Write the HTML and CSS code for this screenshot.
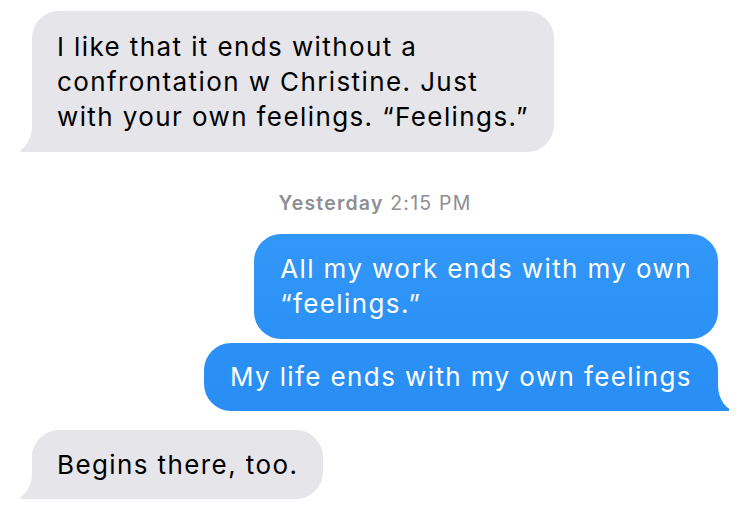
FILE: index.html
```html
<!DOCTYPE html>
<html lang="en">
<head>
    <meta charset="UTF-8">
    <meta name="viewport" content="width=device-width, initial-scale=1.0">
    <title>Messages</title>
    <link rel="stylesheet" href="styles.css">
</head>
<body>
    <div class="thread">
        <div class="msg received tail first">
            I like that it ends without a<br>
            confrontation w Christine. Just<br>
            with your own feelings. “Feelings.”
        </div>

        <p class="timestamp"><b>Yesterday</b> 2:15 PM</p>

        <div class="msg sent">
            All my work ends with my own<br>
            “feelings.”
        </div>
        <div class="msg sent tail">My life ends with my own feelings</div>

        <div class="msg received tail">Begins there, too.</div>
    </div>
</body>
</html>
```

FILE: styles.css
```css
body {
    margin: 0;
    background: #fff;
    font-family: Inter, 'Liberation Sans', sans-serif;
}
.thread {
    display: flex;
    flex-direction: column;
    padding: 11px 32px 0 32px;
}
.msg {
    position: relative;
    font-size: 26px;
    line-height: 35px;
    letter-spacing: 1.4px;
    padding: 17px 25px;
    border-radius: 27px;
    white-space: nowrap;
}
.received {
    align-self: flex-start;
    background: #e5e5ea;
    color: #000;
}
.received.first {
    padding-top: 18px;
    padding-bottom: 18px;
}
.sent {
    align-self: flex-end;
    color: #fff;
    background: linear-gradient(to bottom, #3ca3fb, #2488f3);
    background-attachment: fixed;
    padding: 17px 26px 18px;
}
.sent + .sent {
    margin-top: 4px;
    padding-top: 16px;
    padding-bottom: 17px;
}
.sent.tail + .received {
    margin-top: 19px;
}
.received.tail {
    border-bottom-left-radius: 0;
}
.sent.tail {
    border-bottom-right-radius: 0;
}

/* bubble tails */
.tail::before,
.tail::after {
    content: "";
    position: absolute;
    bottom: 0;
    height: 28px;
}
.received.tail::before {
    left: -11px;
    width: 22px;
    background: inherit;
}
.received.tail::after {
    left: -30px;
    width: 30px;
    background: #fff;
    border-bottom-right-radius: 19px 26px;
}
.sent.tail::before {
    right: -11px;
    width: 22px;
    background: inherit;
}
.sent.tail::after {
    right: -30px;
    width: 30px;
    background: #fff;
    border-bottom-left-radius: 19px 26px;
}

.timestamp {
    margin: 39px 0 19px;
    text-align: center;
    font-size: 19.5px;
    line-height: 24px;
    letter-spacing: 1.2px;
    color: #8e8e93;
}
.timestamp b {
    font-weight: 600;
}
```
